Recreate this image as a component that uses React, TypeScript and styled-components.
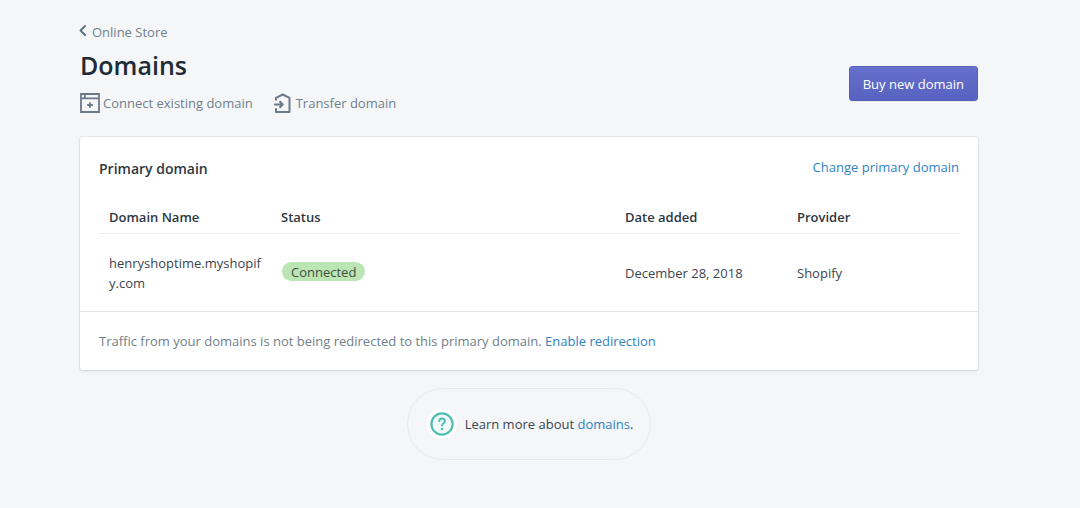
import React from "react";
import styled, { createGlobalStyle } from "styled-components";

const GlobalStyle = createGlobalStyle`
  *, *::before, *::after { box-sizing: border-box; }
  body {
    margin: 0;
    background: #f4f6f8;
    color: #3b4550;
    font-family: "Open Sans", "Noto Sans", sans-serif;
    font-size: 13px;
    line-height: 20px;
  }
`;

const Page = styled.main`
  max-width: 1080px;
  margin: 0 auto;
  padding: 22px 102px 48px 80px;
`;

const Header = styled.header`
  display: flex;
  justify-content: space-between;
  align-items: flex-end;
  padding-bottom: 24px;
`;

const Breadcrumb = styled.a`
  display: inline-flex;
  align-items: center;
  gap: 5px;
  color: #728089;
  text-decoration: none;
`;

const Title = styled.h1`
  margin: 3px 0 10px;
  font-size: 25px;
  line-height: 36px;
  font-weight: 600;
  color: #212b36;
`;

const Actions = styled.div`
  display: flex;
  align-items: center;
  gap: 20px;
`;

const PlainButton = styled.button`
  display: inline-flex;
  align-items: center;
  gap: 3px;
  padding: 0;
  border: 0;
  background: none;
  color: #728089;
  font: inherit;
  cursor: pointer;
`;

const PrimaryButton = styled.button`
  height: 35px;
  margin-bottom: 12px;
  padding: 0 13px;
  border: 1px solid #5460b8;
  border-radius: 3px;
  background: linear-gradient(to bottom, #6470cb, #5863c1);
  box-shadow: inset 0 1px 0 #6b76cf, 0 1px 0 rgba(22, 29, 37, 0.05);
  color: #fff;
  font: inherit;
  cursor: pointer;
`;

const Card = styled.section`
  background: #fff;
  border-radius: 3px;
  box-shadow: 0 0 0 1px rgba(63, 63, 68, 0.06), 0 1px 3px rgba(63, 63, 68, 0.15);
`;

const CardBody = styled.div`
  padding: 20px 19px 0;
`;

const CardHeader = styled.div`
  display: flex;
  justify-content: space-between;
`;

const CardTitle = styled.h2`
  margin: 0;
  font-size: 14px;
  line-height: 24px;
  font-weight: 600;
  color: #2d3742;
`;

const Link = styled.a`
  color: #2f83c5;
  text-decoration: none;
`;

const Table = styled.table`
  width: 100%;
  margin-top: 20px;
  border-collapse: collapse;
  table-layout: fixed;
`;

const HeadCell = styled.th`
  padding: 6px 10px;
  border-bottom: 1px solid #e9ecef;
  text-align: left;
  font-weight: 600;
  color: #2d3742;
`;

const Cell = styled.td`
  height: 77px;
  padding: 2px 10px 0;
  word-break: break-all;
`;

const Badge = styled.span`
  display: inline-block;
  height: 19px;
  margin: 0 1px 4px;
  padding: 0 9px;
  border-radius: 10px;
  background: #bbe5b3;
  color: #414f3e;
`;

const CardFooter = styled.footer`
  padding: 19px 19px;
  border-top: 1px solid #dfe3e8;
  color: #728089;
`;

const HelpRow = styled.aside`
  display: flex;
  justify-content: center;
  padding-top: 18px;
`;

const HelpPill = styled.div`
  display: flex;
  align-items: center;
  gap: 8px;
  padding: 20px 17px 20px 19px;
  border: 1px solid #e6eaee;
  border-radius: 36px;
`;

const BackIcon = () => (
  <svg width="7" height="14" viewBox="2 0 7 14" overflow="visible" fill="none" stroke="#637381" strokeWidth="2" strokeLinecap="round" strokeLinejoin="round" aria-hidden="true">
    <path d="M7 1 2.500 5.500 7 10" />
  </svg>
);

const ConnectIcon = () => (
  <svg width="20" height="20" viewBox="0 0 20 20" fill="none" stroke="#6c7a88" strokeWidth="1.8" aria-hidden="true">
    <path d="M1 1h18v18H1zM1 5.3h18M4.800 1v4.300M10 9.200v5.600M7.200 12h5.600" />
  </svg>
);

const TransferIcon = () => (
  <svg width="20" height="20" viewBox="0 0 20 20" fill="none" stroke="#6c7a88" strokeWidth="2" strokeLinejoin="round" aria-hidden="true">
    <path d="M3 7.500V4.800L9.700 1.500 16.500 4.800V19H3v-3.800M1 11.500h8.500M6.500 8.300l3.200 3.200-3.200 3.200" />
  </svg>
);

const HelpIcon = () => (
  <svg width="30" height="30" viewBox="0 0 30 30" fill="none" aria-hidden="true">
    <circle cx="15" cy="15" r="15" fill="#fff" />
    <circle cx="15" cy="15" r="10.600" fill="#f2fbfa" stroke="#50bdb5" strokeWidth="2.200" />
    <path d="M12.300 12.300c0-1.600 1.200-2.700 2.800-2.700s2.800 1 2.800 2.600c0 1.900-2.800 2.100-2.800 4.200" stroke="#50bdb5" strokeWidth="2" strokeLinecap="round" />
    <circle cx="15.100" cy="20" r="1.300" fill="#50bdb5" />
  </svg>
);

export default function App() {
  return (
    <>
      <GlobalStyle />
      <Page>
        <Header>
          <div>
            <Breadcrumb href="#online-store">
              <BackIcon />
              Online Store
            </Breadcrumb>
            <Title>Domains</Title>
            <Actions>
              <PlainButton type="button">
                <ConnectIcon />
                Connect existing domain
              </PlainButton>
              <PlainButton type="button">
                <TransferIcon />
                Transfer domain
              </PlainButton>
            </Actions>
          </div>
          <PrimaryButton type="button">Buy new domain</PrimaryButton>
        </Header>

        <Card>
          <CardBody>
            <CardHeader>
              <CardTitle>Primary domain</CardTitle>
              <Link href="#change">Change primary domain</Link>
            </CardHeader>
            <Table>
              <colgroup>
                <col width="20%" />
                <col width="40%" />
                <col width="20%" />
                <col width="20%" />
              </colgroup>
              <thead>
                <tr>
                  <HeadCell scope="col">Domain Name</HeadCell>
                  <HeadCell scope="col">Status</HeadCell>
                  <HeadCell scope="col">Date added</HeadCell>
                  <HeadCell scope="col">Provider</HeadCell>
                </tr>
              </thead>
              <tbody>
                <tr>
                  <Cell>henryshoptime.myshopify.com</Cell>
                  <Cell>
                    <Badge>Connected</Badge>
                  </Cell>
                  <Cell>December 28, 2018</Cell>
                  <Cell>Shopify</Cell>
                </tr>
              </tbody>
            </Table>
          </CardBody>
          <CardFooter>
            Traffic from your domains is not being redirected to this primary domain.{" "}
            <Link href="#redirect">Enable redirection</Link>
          </CardFooter>
        </Card>

        <HelpRow>
          <HelpPill>
            <HelpIcon />
            <span>
              Learn more about <Link href="#domains">domains</Link>.
            </span>
          </HelpPill>
        </HelpRow>
      </Page>
    </>
  );
}
